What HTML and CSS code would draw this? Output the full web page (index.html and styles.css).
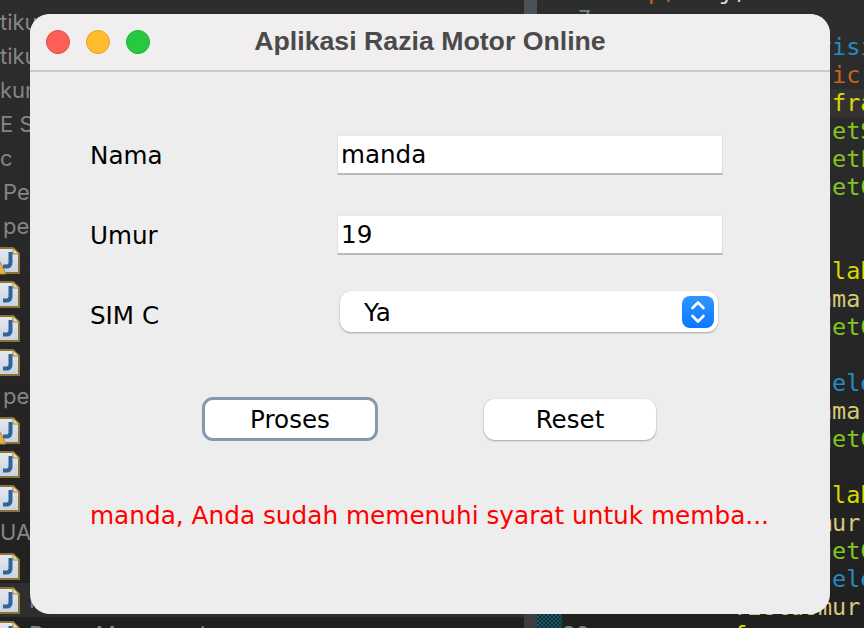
FILE: index.html
```html
<!DOCTYPE html>
<html lang="id">
<head>
<meta charset="utf-8">
<title>Aplikasi Razia Motor Online</title>
<link rel="stylesheet" href="styles.css">
</head>
<body>
<div class="desktop">
  <aside class="tree">
    <div class="row">tikum</div>
    <div class="row">tikum</div>
    <div class="row">kum</div>
    <div class="row">E SE</div>
    <div class="row">c</div>
    <div class="row ind">Pel</div>
    <div class="row ind">pel</div>
    <div class="row file"><svg class="jicon" viewBox="0 0 24 27"><use href="#java"/><path d="M-1 13 L6 27 H-8 Z" fill="#e8b04a" stroke="#b9802c"/></svg><span class="fname">Aplikasi</span></div>
    <div class="row file"><svg class="jicon" viewBox="0 0 24 27"><use href="#java"/></svg><span class="fname">Bantu</span></div>
    <div class="row file"><svg class="jicon" viewBox="0 0 24 27"><use href="#java"/></svg><span class="fname">Data</span></div>
    <div class="row file"><svg class="jicon" viewBox="0 0 24 27"><use href="#java"/></svg><span class="fname">Form</span></div>
    <div class="row ind">pel</div>
    <div class="row file"><svg class="jicon" viewBox="0 0 24 27"><use href="#java"/><path d="M-1 13 L6 27 H-8 Z" fill="#e8b04a" stroke="#b9802c"/></svg><span class="fname">Aplikasi</span></div>
    <div class="row file"><svg class="jicon" viewBox="0 0 24 27"><use href="#java"/></svg><span class="fname">Bantu</span></div>
    <div class="row file"><svg class="jicon" viewBox="0 0 24 27"><use href="#java"/></svg><span class="fname">Data</span></div>
    <div class="row">UAS</div>
    <div class="row file"><svg class="jicon" viewBox="0 0 24 27"><use href="#java"/></svg><span class="fname">Bantu</span></div>
    <div class="row file active"><svg class="jicon" viewBox="0 0 24 27"><use href="#java"/></svg><span class="fname">Main</span></div>
    <div class="row file"><svg class="jicon" viewBox="0 0 24 27"><use href="#java"/></svg><span class="fname">Dasar Menumpuk</span></div>
  </aside>
  <div class="divider"></div>
  <div class="gutter">
    <div class="fold"><div class="marker"></div></div>
    <div class="nums">
      <div class="num">6</div>
      <div class="num">7</div>
      <div class="num nums-tail">28</div>
      <div class="num nums-end">29</div>
    </div>
  </div>
  <main class="code">
    <div class="line top or">p,   <i class="wh">j,</i></div>
    <div class="line"> </div>
    <div class="line bl">      visible</div>
    <div class="line or">   public</div>
    <div class="line ye cur">       frame</div>
    <div class="line gr">      setSize</div>
    <div class="line gr">      setLayout</div>
    <div class="line gr">      getContent</div>
    <div class="line"> </div>
    <div class="line"> </div>
    <div class="line ye">       label</div>
    <div class="line ta">     nama</div>
    <div class="line gr">      getContent</div>
    <div class="line"> </div>
    <div class="line bl">      select</div>
    <div class="line ta">     nama</div>
    <div class="line gr">      getContent</div>
    <div class="line"> </div>
    <div class="line ye">       label</div>
    <div class="line ta">     umur</div>
    <div class="line gr">      getContent</div>
    <div class="line bl">      select</div>
    <div class="line ta">fieldUmur</div>
    <div class="line ye">frame</div>
  </main>

  <section class="window">
    <header class="titlebar">
      <div class="lights">
        <span class="light red"></span>
        <span class="light amber"></span>
        <span class="light green"></span>
      </div>
      <h1 class="title">Aplikasi Razia Motor Online</h1>
    </header>
    <div class="content">
      <div class="form">
        <label class="label">Nama</label>
        <div class="field">manda</div>
        <label class="label">Umur</label>
        <div class="field">19</div>
        <label class="label">SIM C</label>
        <div class="combo">
          <span class="combo-text">Ya</span>
          <span class="stepper">
            <svg viewBox="0 0 32 32" width="32" height="32"><path d="M10.5 12 L16 6.5 L21.5 12 M10.5 20 L16 25.5 L21.5 20" fill="none" stroke="#fff" stroke-width="2.6" stroke-linecap="round" stroke-linejoin="round"/></svg>
          </span>
        </div>
      </div>
      <div class="actions">
        <button class="btn focus">Proses</button>
        <button class="btn">Reset</button>
      </div>
      <p class="result">manda, Anda sudah memenuhi syarat untuk memba...</p>
    </div>
  </section>
</div>

<svg class="defs" width="0" height="0">
  <defs>
    <linearGradient id="pg" x1="0" y1="0" x2="0" y2="1"><stop offset="0" stop-color="#e6e9f0"/><stop offset="1" stop-color="#c9d2e0"/></linearGradient>
    <g id="java">
      <path d="M-6 1 H13 L19 7 V26 H-6 Z" fill="url(#pg)" stroke="#8a7238" stroke-width="2"/>
      <path d="M13 1 V7 H19 Z" fill="#ecd9a8" stroke="#a98a45" stroke-width="1"/>
      <path d="M10.5 5 V15.5 Q10.5 19.5 6.5 19.5 H3" fill="none" stroke="#2f6499" stroke-width="4"/>
    </g>
  </defs>
</svg>
</body>
</html>
```
FILE: styles.css
```css
* { box-sizing: border-box; }
html, body { margin: 0; padding: 0; height: 100%; overflow: hidden; }
.desktop {
  position: relative;
  display: flex;
  width: 864px;
  height: 628px;
  overflow: hidden;
  background: linear-gradient(#2d2d2d, #202020);
  font-family: "DejaVu Sans", sans-serif;
}
.tree {
  width: 524px;
  flex: none;
  padding-top: 5px;
  font-family: Inter, sans-serif;
  font-size: 22px;
  color: #858585;
}
.row {
  height: 34px;
  line-height: 34px;
  white-space: nowrap;
}
.row.ind { padding-left: 3px; }
.file { display: flex; align-items: flex-start; }
.file.active { background: #2e2e2e; }
.jicon { width: 24px; height: 27px; margin-top: 4px; flex: none; overflow: visible; }
.fname { margin-left: 5px; }
.divider { width: 13px; flex: none; background: linear-gradient(#4b5155, #3a3e40); }
.gutter { width: 101px; flex: none; display: flex; }
.fold { width: 25px; flex: none; display: flex; flex-direction: column; justify-content: flex-end; }
.marker {
  height: 14px;
  background: repeating-conic-gradient(#0d5b6b 0 25%, #1b2b30 0 50%) 0 0 / 4px 4px;
}
.nums { flex: 1; margin-top: -23px; }
.num {
  height: 28px;
  line-height: 28px;
  font-family: "DejaVu Sans Mono", monospace;
  font-size: 22px;
  color: #6b8a90;
  padding-left: 16px;
}
.nums-tail { margin-top: 560px; padding-left: 1px; }
.nums-end { padding-left: 1px; }
.code {
  flex: 1;
  margin-top: -23px;
  padding-left: 95px;
  font-family: "DejaVu Sans Mono", monospace;
  font-size: 23.5px;
  min-width: 0;
}
.line { height: 28px; line-height: 28px; white-space: pre; }
.line.top { margin-left: -85px; }
.line i { font-style: normal; }
.line.cur { background: #333333; }
.bl { color: #2a8ac0; }
.or { color: #c4651f; }
.ye { color: #d9d900; }
.gr { color: #84c51e; }
.ta { color: #d6c878; }
.wh { color: #cfd8e6; }

.window {
  position: absolute;
  left: 30px;
  top: 14px;
  width: 800px;
  height: 600px;
  border-radius: 20px;
  overflow: hidden;
  background: #ededed;
}
.titlebar {
  position: relative;
  height: 58px;
  padding-bottom: 2px;
  background: #f0eeef;
  border-bottom: 2px solid #cccbcb;
  display: flex;
  align-items: center;
  justify-content: center;
}
.lights {
  position: absolute;
  left: 16px;
  top: 16px;
  display: flex;
  gap: 16px;
}
.light { width: 24px; height: 24px; border-radius: 50%; border: 1px solid transparent; }
.red { background: #ff5f57; border-color: #e4473f; }
.amber { background: #febc2e; border-color: #dfa023; }
.green { background: #28c840; border-color: #1fae33; }
.title {
  margin: 0;
  font-family: "Liberation Sans", sans-serif;
  font-size: 26.7px;
  font-weight: 700;
  color: #4a4a4a;
}
.content {
  padding-top: 63px;
  font-size: 24.6px;
  color: #000;
}
.form {
  display: grid;
  grid-template-columns: 247px 386px;
  grid-auto-rows: 40px;
  row-gap: 40px;
  padding-left: 60px;
}
.label { line-height: 41px; }
.field {
  background: #fff;
  border-left: 1px solid #e2e2e2;
  border-right: 1px solid #dcdcdc;
  border-top: 1px solid #e8e8e8;
  border-bottom: 2px solid #b9b9b9;
  padding-left: 3px;
  line-height: 38px;
}
.combo {
  display: flex;
  align-items: center;
  justify-content: space-between;
  width: 378px;
  height: 41px;
  margin: -4px 0 0 3px;
  padding: 0 4px 0 24px;
  background: #fff;
  border-radius: 11px;
  box-shadow: 0 1px 2px rgba(0, 0, 0, .3), 0 0 1px rgba(0, 0, 0, .15);
}
.combo-text { padding-top: 2px; }
.stepper {
  display: block;
  width: 32px;
  height: 32px;
  border-radius: 8px;
  background: linear-gradient(#2f95ff, #0a78ff);
}
.stepper svg { display: block; }
.actions {
  display: flex;
  align-items: center;
  gap: 106px;
  margin-top: 62px;
  padding-left: 172px;
}
.btn {
  font: inherit;
  color: #000;
  width: 172px;
  height: 41px;
  padding: 1px 0 0;
  background: #fff;
  border: 0;
  border-radius: 11px;
  box-shadow: 0 1px 2px rgba(0, 0, 0, .3), 0 0 1px rgba(0, 0, 0, .15);
}
.btn.focus {
  width: 176px;
  height: 44px;
  border: 3px solid #8499b0;
  box-shadow: none;
}
.result {
  margin: 55px 0 0;
  padding-left: 60px;
  font-size: 24.75px;
  line-height: 40px;
  color: #ff0000;
  white-space: nowrap;
}
.defs { position: absolute; }
```
